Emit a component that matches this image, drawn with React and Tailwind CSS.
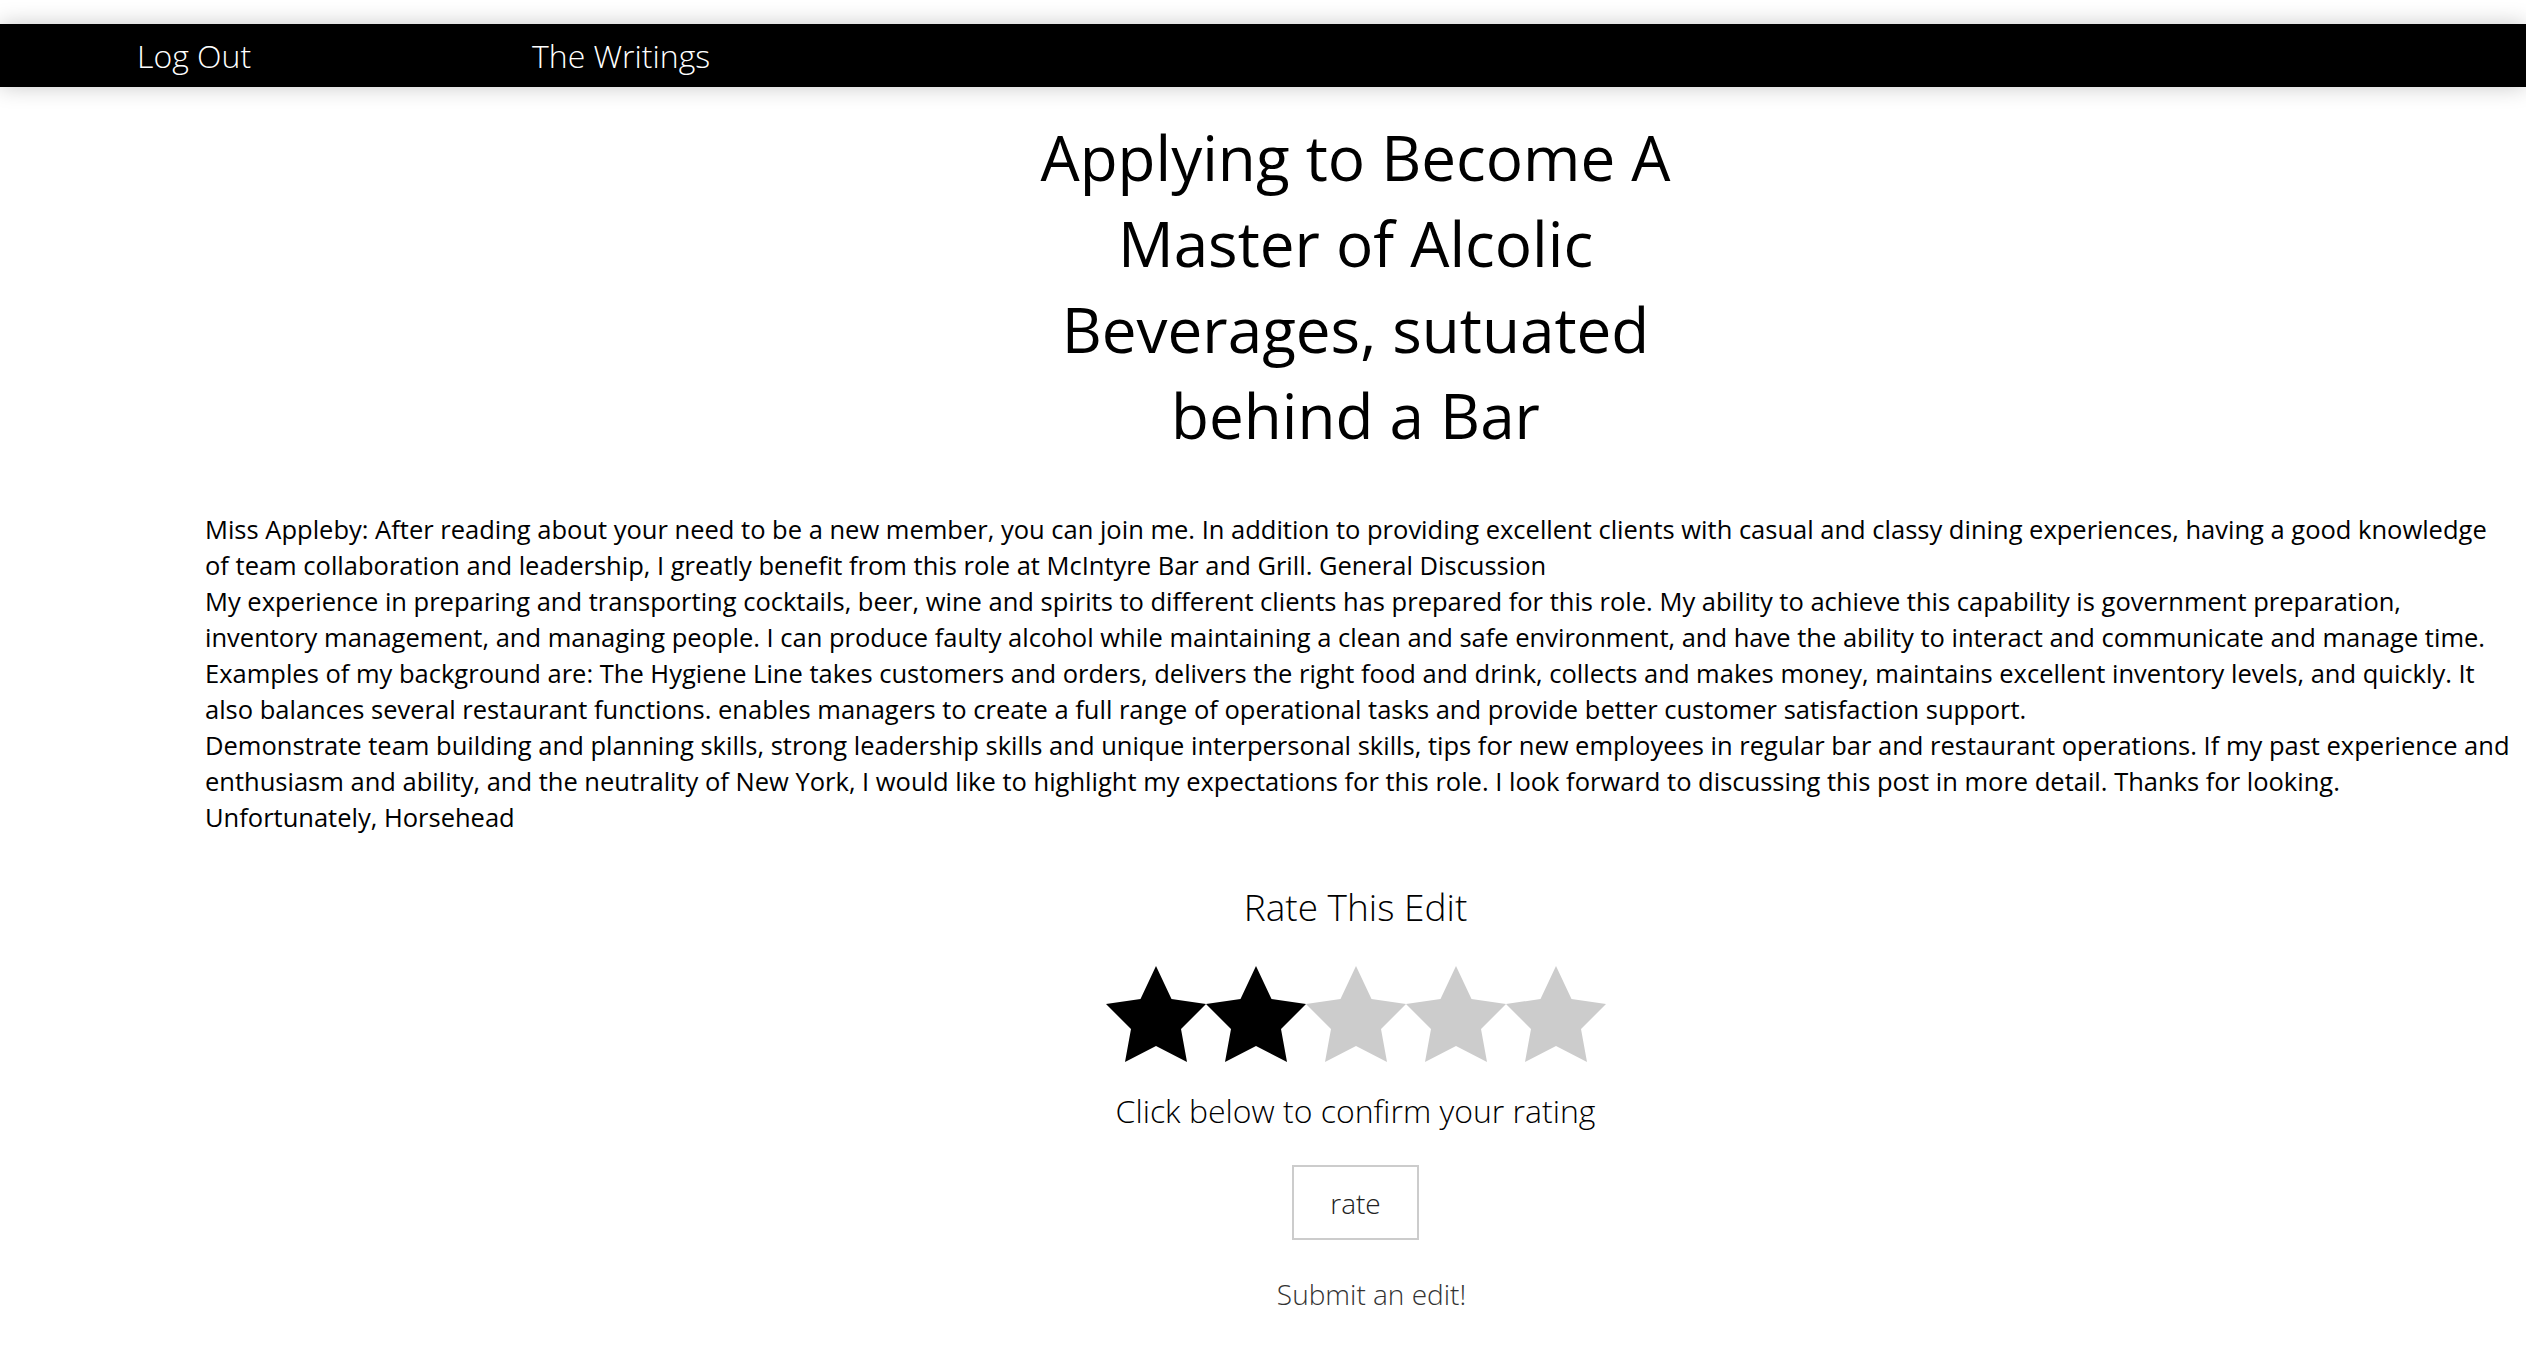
import React from 'react';

const font = { fontFamily: '"Open Sans", "Liberation Sans", sans-serif' };

const Star = ({ filled }) => (
  <svg viewBox="0 0 100 96" className="w-[100px] h-[96px]">
    <polygon
      points="50,0 65.5,33 100,38 75,63 81,96 50,80 19,96 25,63 0,38 34.5,33"
      fill={filled ? '#000000' : '#cccccc'}
    />
  </svg>
);

const paragraphs = [
  'Miss Appleby: After reading about your need to be a new member, you can join me. In addition to providing excellent clients with casual and classy dining experiences, having a good knowledge of team collaboration and leadership, I greatly benefit from this role at McIntyre Bar and Grill. General Discussion',
  'My experience in preparing and transporting cocktails, beer, wine and spirits to different clients has prepared for this role. My ability to achieve this capability is government preparation, inventory management, and managing people. I can produce faulty alcohol while maintaining a clean and safe environment, and have the ability to interact and communicate and manage time. Examples of my background are: The Hygiene Line takes customers and orders, delivers the right food and drink, collects and makes money, maintains excellent inventory levels, and quickly. It also balances several restaurant functions. enables managers to create a full range of operational tasks and provide better customer satisfaction support.',
  'Demonstrate team building and planning skills, strong leadership skills and unique interpersonal skills, tips for new employees in regular bar and restaurant operations. If my past experience and enthusiasm and ability, and the neutrality of New York, I would like to highlight my expectations for this role. I look forward to discussing this post in more detail. Thanks for looking.',
  'Unfortunately, Horsehead',
];

export default function App() {
  return (
    <div className="min-h-screen bg-white text-black" style={font}>
      {/* Nav */}
      <div className="pt-[24px]">
        <nav className="h-[63px] bg-black flex items-center shadow-[0_0_22px_rgba(0,0,0,0.22)]">
          <a className="ml-[137px] w-[395px] text-white text-[32px] font-light">Log Out</a>
          <a className="text-white text-[32px] font-light">The Writings</a>
        </nav>
      </div>

      <main className="pl-[205px] pr-[14px]">
        <div className="pr-[6px]">
          <h1 className="w-[700px] mx-auto mt-[27px] text-center text-[62px] leading-[86px] font-normal">
            Applying to Become A Master of Alcolic Beverages, sutuated behind a Bar
          </h1>
        </div>

        <div className="mt-[53px] text-[25.5px] leading-[36px] font-normal">
          {paragraphs.map((p, i) => (
            <p key={i}>{p}</p>
          ))}
        </div>

        <div className="flex flex-col items-center mt-[46px] pr-[6px]">
          <h3 className="text-[37px] leading-[52px] font-light">Rate This Edit</h3>
          <div className="flex mt-[33px]">
            {[1, 2, 3, 4, 5].map((n) => (
              <Star key={n} filled={n <= 2} />
            ))}
          </div>
          <p className="mt-[27px] text-[32px] leading-[44px] font-light">Click below to confirm your rating</p>
          <button className="mt-[32px] w-[127px] h-[75px] border-2 border-[#cccccc] bg-white text-[28px] font-light text-[#222]">
            rate
          </button>
          <a className="mt-[34px] ml-[32px] text-[28px] leading-[40px] font-light text-[#333]">Submit an edit!</a>
        </div>
      </main>
    </div>
  );
}
